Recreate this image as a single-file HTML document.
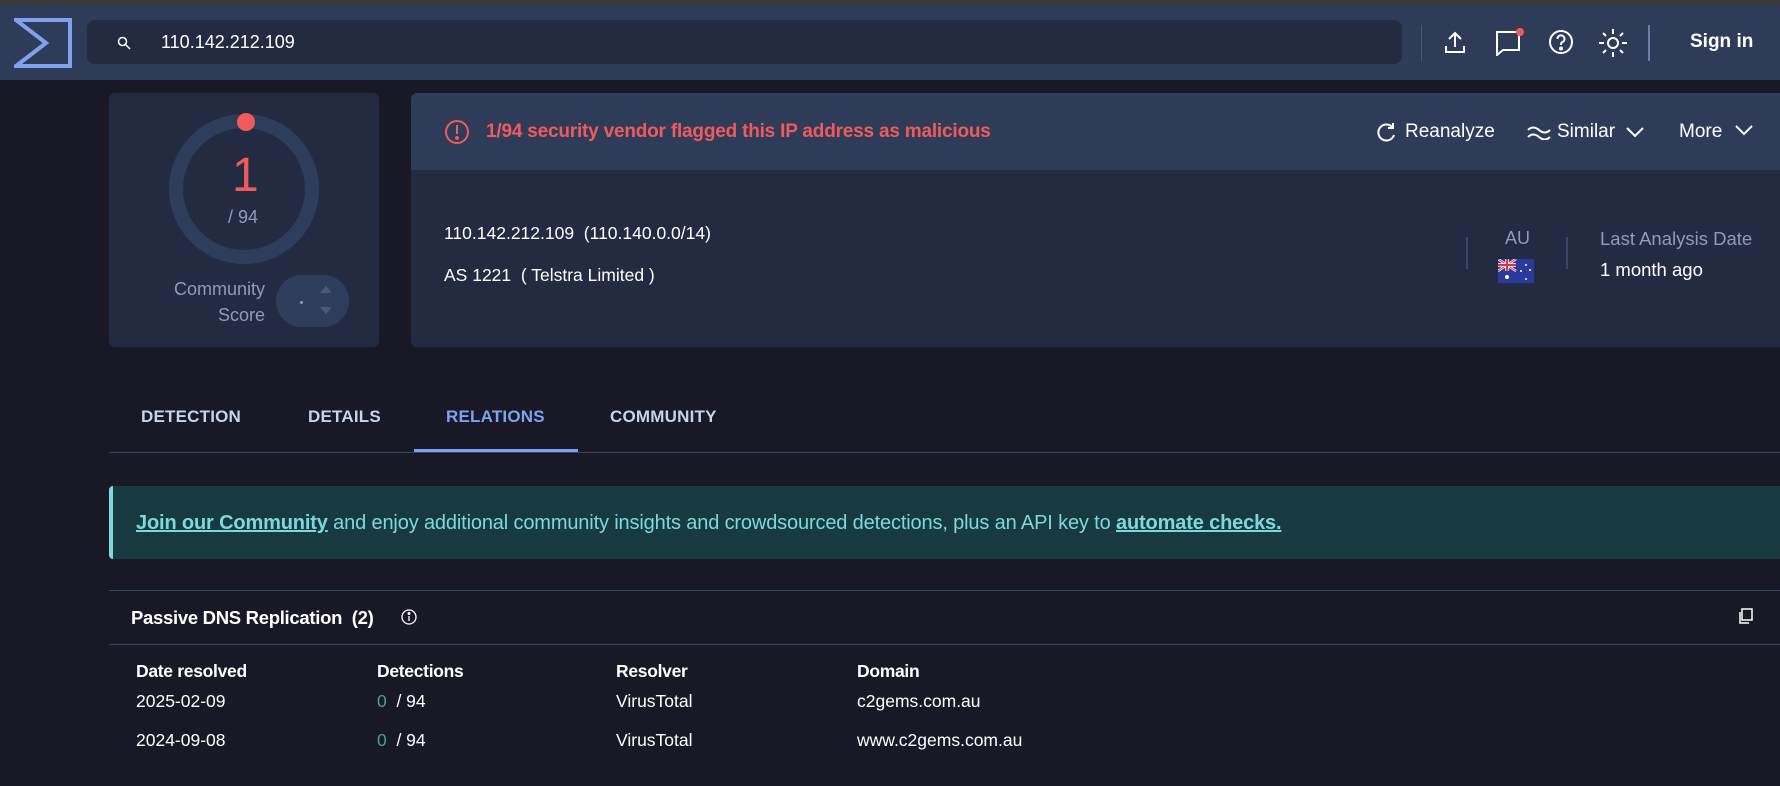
<!DOCTYPE html>
<html><head><meta charset="utf-8"><style>
*{margin:0;padding:0;box-sizing:border-box}
body{width:1780px;height:786px;overflow:hidden;background:#181826;font-family:"Liberation Sans",sans-serif;color:#fff;position:relative}
.a{position:absolute;white-space:nowrap}
.top{left:0;top:0;width:1780px;height:5px;background:#3a3a3e}
.nav{left:0;top:5px;width:1780px;height:75px;background:#2e3c5a}
.search{left:87px;top:20px;width:1315px;height:44px;background:#232b42;border-radius:8px}
.card{background:#232b42;border-radius:6px}
.tab{top:407px;font-size:17px;font-weight:bold;color:#c8d3ea;letter-spacing:0.2px}
</style></head><body>
<div class="a top"></div>
<div class="a nav"></div>
<svg class="a" style="left:14px;top:18px" width="58" height="50" viewBox="0 0 58 50"><path d="M2 2H56V48H2L32 25Z" fill="none" stroke="#7ea1f0" stroke-width="4"/></svg>
<div class="a search"></div>
<svg class="a" style="left:117px;top:36px" width="14" height="14" viewBox="0 0 14 14"><circle cx="5.5" cy="5.5" r="4" fill="none" stroke="#fff" stroke-width="1.5"/><path d="M8.5 8.5L13 13" stroke="#fff" stroke-width="1.5"/></svg>
<div class="a" style="left:161px;top:32px;font-size:18px">110.142.212.109</div>
<div class="a" style="left:1421px;top:25px;width:1px;height:36px;background:#4a5877"></div>
<svg class="a" style="left:1444px;top:30px" width="22" height="24" viewBox="0 0 22 24" fill="none" stroke="#fff" stroke-width="2"><path d="M11 17V3M5 9l6-6 6 6M2 16v6h18v-6"/></svg>
<svg class="a" style="left:1495px;top:28px" width="30" height="28" viewBox="0 0 30 28" fill="none" stroke="#fff" stroke-width="2"><path d="M2 4h22v18H8l-6 5z"/><circle cx="25" cy="4" r="4" fill="#f05a5a" stroke="none"/></svg>
<svg class="a" style="left:1548px;top:29px" width="26" height="26" viewBox="0 0 26 26" fill="none" stroke="#fff" stroke-width="2"><circle cx="13" cy="13" r="11"/><path d="M9.5 10a3.5 3.5 0 1 1 5 3c-1.5.8-1.5 1.5-1.5 3"/><circle cx="13" cy="19.5" r="1" fill="#fff"/></svg>
<svg class="a" style="left:1598px;top:28px" width="30" height="30" viewBox="0 0 30 30" fill="none" stroke="#fff" stroke-width="2"><circle cx="15" cy="15" r="5"/><path d="M15 1v5M15 24v5M1 15h5M24 15h5M5 5l3 3M22 22l3 3M5 25l3-3M22 8l3-3"/></svg>
<div class="a" style="left:1648px;top:25px;width:2px;height:36px;background:#6c7fa8"></div>
<div class="a" style="left:1690px;top:31px;font-size:19px;font-weight:bold">Sign in</div>

<div class="a card" style="left:109px;top:93px;width:270px;height:254px"></div>
<svg class="a" style="left:160px;top:110px" width="170" height="170" viewBox="0 0 170 170"><circle cx="84" cy="79" r="68" fill="none" stroke="#2f3d5c" stroke-width="14"/><circle cx="86" cy="12" r="9" fill="#f05a5a"/></svg>
<div class="a" style="left:232px;top:148px;font-size:48px;color:#f05a5a">1</div>
<div class="a" style="left:228px;top:207px;font-size:18px;color:#8d9bb8">/ 94</div>
<div class="a" style="left:160px;top:276px;font-size:18px;color:#8d9bb8;text-align:right;width:105px;line-height:26px">Community<br>Score</div>
<div class="a" style="left:276px;top:275px;width:73px;height:52px;border-radius:26px;background:#2f3d5c"></div>
<div class="a" style="left:300px;top:301px;width:3px;height:3px;border-radius:2px;background:#8d9bb8"></div>
<svg class="a" style="left:318px;top:283px" width="16" height="34" viewBox="0 0 16 34" fill="#4a5877"><path d="M2 10L8 3l6 7zM2 24l6 7 6-7z"/></svg>

<div class="a card" style="left:411px;top:93px;width:1380px;height:254px"></div>
<div class="a" style="left:411px;top:93px;width:1380px;height:77px;background:#2e3c5a;border-radius:6px 0 0 0"></div>
<svg class="a" style="left:444px;top:119px" width="26" height="26" viewBox="0 0 26 26" fill="none" stroke="#f05a5a" stroke-width="2"><circle cx="13" cy="13" r="11"/><path d="M13 6v9"/><circle cx="13" cy="19" r="1" fill="#f05a5a"/></svg>
<div class="a" style="left:486px;top:121px;font-size:19px;font-weight:bold;color:#f05a5a;letter-spacing:-0.2px">1/94 security vendor flagged this IP address as malicious</div>
<svg class="a" style="left:1376px;top:122px" width="20" height="22" viewBox="0 0 20 22" fill="none" stroke="#fff" stroke-width="2"><path d="M17 6A8 8 0 1 0 18 13M17 1v5h-5"/></svg>
<div class="a" style="left:1405px;top:121px;font-size:19px">Reanalyze</div>
<svg class="a" style="left:1527px;top:124px" width="24" height="16" viewBox="0 0 24 16" fill="none" stroke="#fff" stroke-width="2"><path d="M1 6q5-5 11 0t11 0M1 13q5-5 11 0t11 0"/></svg>
<div class="a" style="left:1557px;top:121px;font-size:19px">Similar</div>
<svg class="a" style="left:1626px;top:126px" width="18" height="12" viewBox="0 0 18 12" fill="none" stroke="#fff" stroke-width="2"><path d="M1 2l8 8 8-8"/></svg>
<div class="a" style="left:1679px;top:121px;font-size:19px">More</div>
<svg class="a" style="left:1735px;top:124px" width="18" height="12" viewBox="0 0 18 12" fill="none" stroke="#fff" stroke-width="2"><path d="M1 2l8 8 8-8"/></svg>

<div class="a" style="left:444px;top:223px;font-size:17.5px">110.142.212.109&nbsp;&nbsp;(110.140.0.0/14)</div>
<div class="a" style="left:444px;top:265px;font-size:17.5px">AS 1221&nbsp;&nbsp;( Telstra Limited )</div>
<div class="a" style="left:1466px;top:237px;width:2px;height:32px;background:#3a4868"></div>
<div class="a" style="left:1505px;top:228px;font-size:18px;color:#8d9bb8">AU</div>
<svg class="a" style="left:1498px;top:259px" width="36" height="24" viewBox="0 0 36 24"><rect width="36" height="24" fill="#2a3a9a"/><path d="M0 0l18 12M18 0L0 12" stroke="#fff" stroke-width="2.5"/><path d="M0 0l18 12M18 0L0 12" stroke="#e03040" stroke-width="1"/><path d="M9 0v12M0 6h18" stroke="#fff" stroke-width="3.5"/><path d="M9 0v12M0 6h18" stroke="#e03040" stroke-width="2"/><circle cx="9" cy="18" r="2" fill="#fff"/><circle cx="28" cy="6" r="1" fill="#fff"/><circle cx="23" cy="12" r="1" fill="#fff"/><circle cx="32" cy="11" r="1" fill="#fff"/><circle cx="28" cy="20" r="1" fill="#fff"/></svg>
<div class="a" style="left:1566px;top:237px;width:2px;height:32px;background:#3a4868"></div>
<div class="a" style="left:1600px;top:228px;font-size:18.5px;color:#8d9bb8">Last Analysis Date</div>
<div class="a" style="left:1600px;top:259px;font-size:18.5px">1 month ago</div>

<div class="a tab" style="left:141px">DETECTION</div>
<div class="a tab" style="left:308px">DETAILS</div>
<div class="a tab" style="left:446px;color:#7ea1f0">RELATIONS</div>
<div class="a tab" style="left:610px">COMMUNITY</div>
<div class="a" style="left:109px;top:452px;width:1671px;height:1px;background:#3a4868"></div>
<div class="a" style="left:414px;top:449px;width:164px;height:3px;background:#7ea1f0"></div>

<div class="a" style="left:109px;top:486px;width:1671px;height:73px;background:#163a40;border-left:4px solid #7dd8dc;border-radius:4px 0 0 4px"></div>
<div class="a" style="left:136px;top:512px;font-size:20px;color:#7dd8dc;letter-spacing:-0.15px"><b style="text-decoration:underline">Join our Community</b> and enjoy additional community insights and crowdsourced detections, plus an API key to <b style="text-decoration:underline">automate checks.</b></div>

<div class="a" style="left:109px;top:590px;width:1671px;height:1px;background:#3a4868"></div>
<div class="a" style="left:131px;top:607px;font-size:18.5px;font-weight:bold;letter-spacing:-0.3px">Passive DNS Replication&nbsp;&nbsp;(2)</div>
<svg class="a" style="left:400px;top:608px" width="18" height="18" viewBox="0 0 18 18" fill="none" stroke="#fff" stroke-width="1.3"><circle cx="9" cy="9" r="7"/><path d="M9 8v5"/><circle cx="9" cy="5.5" r=".8" fill="#fff"/></svg>
<svg class="a" style="left:1737px;top:607px" width="18" height="18" viewBox="0 0 18 18" fill="none" stroke="#fff" stroke-width="1.5"><rect x="5" y="2" width="10" height="11"/><path d="M3 5v11h9"/></svg>
<div class="a" style="left:109px;top:644px;width:1671px;height:1px;background:#3a4868"></div>
<div class="a" style="left:136px;top:661px;font-size:17.5px;font-weight:bold;letter-spacing:-0.3px">Date resolved</div>
<div class="a" style="left:377px;top:661px;font-size:17.5px;font-weight:bold;letter-spacing:-0.3px">Detections</div>
<div class="a" style="left:616px;top:661px;font-size:17.5px;font-weight:bold;letter-spacing:-0.3px">Resolver</div>
<div class="a" style="left:857px;top:661px;font-size:17.5px;font-weight:bold;letter-spacing:-0.3px">Domain</div>
<div class="a" style="left:136px;top:691px;font-size:17.5px">2025-02-09</div>
<div class="a" style="left:377px;top:691px;font-size:17.5px"><span style="color:#3aa88a">0</span>&nbsp;&nbsp;/ 94</div>
<div class="a" style="left:616px;top:691px;font-size:17.5px">VirusTotal</div>
<div class="a" style="left:857px;top:691px;font-size:17.5px">c2gems.com.au</div>
<div class="a" style="left:136px;top:730px;font-size:17.5px">2024-09-08</div>
<div class="a" style="left:377px;top:730px;font-size:17.5px"><span style="color:#3aa88a">0</span>&nbsp;&nbsp;/ 94</div>
<div class="a" style="left:616px;top:730px;font-size:17.5px">VirusTotal</div>
<div class="a" style="left:857px;top:730px;font-size:17.5px">www.c2gems.com.au</div>
</body></html>
